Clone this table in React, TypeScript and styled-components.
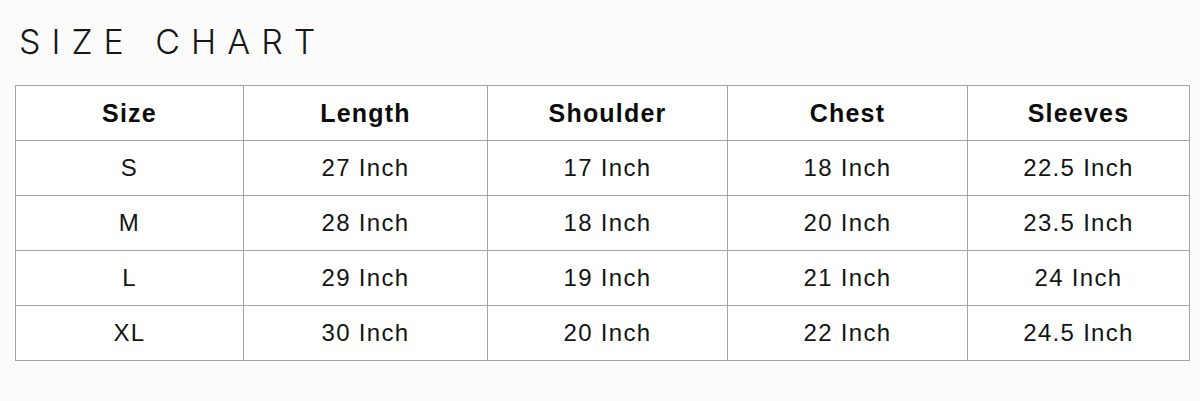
import React from "react";
import styled, { createGlobalStyle } from "styled-components";

const GlobalStyle = createGlobalStyle`
  html, body {
    margin: 0;
    padding: 0;
    background: #fbfbfb;
  }
  body {
    font-family: "Liberation Sans", Arial, sans-serif;
    color: #111;
  }
`;

const Page = styled.div`
  width: 1200px;
  height: 401px;
  box-sizing: border-box;
  padding: 20px 11px 0 15px;
`;

const Title = styled.h1`
  margin: 0 0 21px 4px;
  font-family: Inter, "Liberation Sans", sans-serif;
  font-weight: 300;
  font-size: 34px;
  line-height: 44px;
  letter-spacing: 11px;
  color: #161616;
`;

const Table = styled.table`
  width: 1174px;
  border-collapse: collapse;
  table-layout: fixed;
  background: #fff;
`;

const HeadCell = styled.th`
  height: 54px;
  border: 1px solid #a4a4a4;
  font-size: 25px;
  font-weight: 700;
  letter-spacing: 1.2px;
  text-align: center;
  padding: 0;
  vertical-align: middle;
  color: #0c0c0c;
`;

const Cell = styled.td`
  height: 54px;
  border: 1px solid #a4a4a4;
  font-size: 24px;
  font-weight: 400;
  letter-spacing: 1.3px;
  text-align: center;
  padding: 0;
  vertical-align: middle;
  color: #141414;
`;

const columns = [
  { label: "Size", width: 228 },
  { label: "Length", width: 244 },
  { label: "Shoulder", width: 240 },
  { label: "Chest", width: 240 },
  { label: "Sleeves", width: 222 },
];

const rows = [
  ["S", "27 Inch", "17 Inch", "18 Inch", "22.5 Inch"],
  ["M", "28 Inch", "18 Inch", "20 Inch", "23.5 Inch"],
  ["L", "29 Inch", "19 Inch", "21 Inch", "24 Inch"],
  ["XL", "30 Inch", "20 Inch", "22 Inch", "24.5 Inch"],
];

export default function App() {
  return (
    <Page>
      <GlobalStyle />
      <Title>SIZE CHART</Title>
      <Table>
        <colgroup>
          {columns.map((c) => (
            <col key={c.label} style={{ width: c.width }} />
          ))}
        </colgroup>
        <thead>
          <tr>
            {columns.map((c) => (
              <HeadCell key={c.label}>{c.label}</HeadCell>
            ))}
          </tr>
        </thead>
        <tbody>
          {rows.map((r) => (
            <tr key={r[0]}>
              {r.map((v, i) => (
                <Cell key={i}>{v}</Cell>
              ))}
            </tr>
          ))}
        </tbody>
      </Table>
    </Page>
  );
}
